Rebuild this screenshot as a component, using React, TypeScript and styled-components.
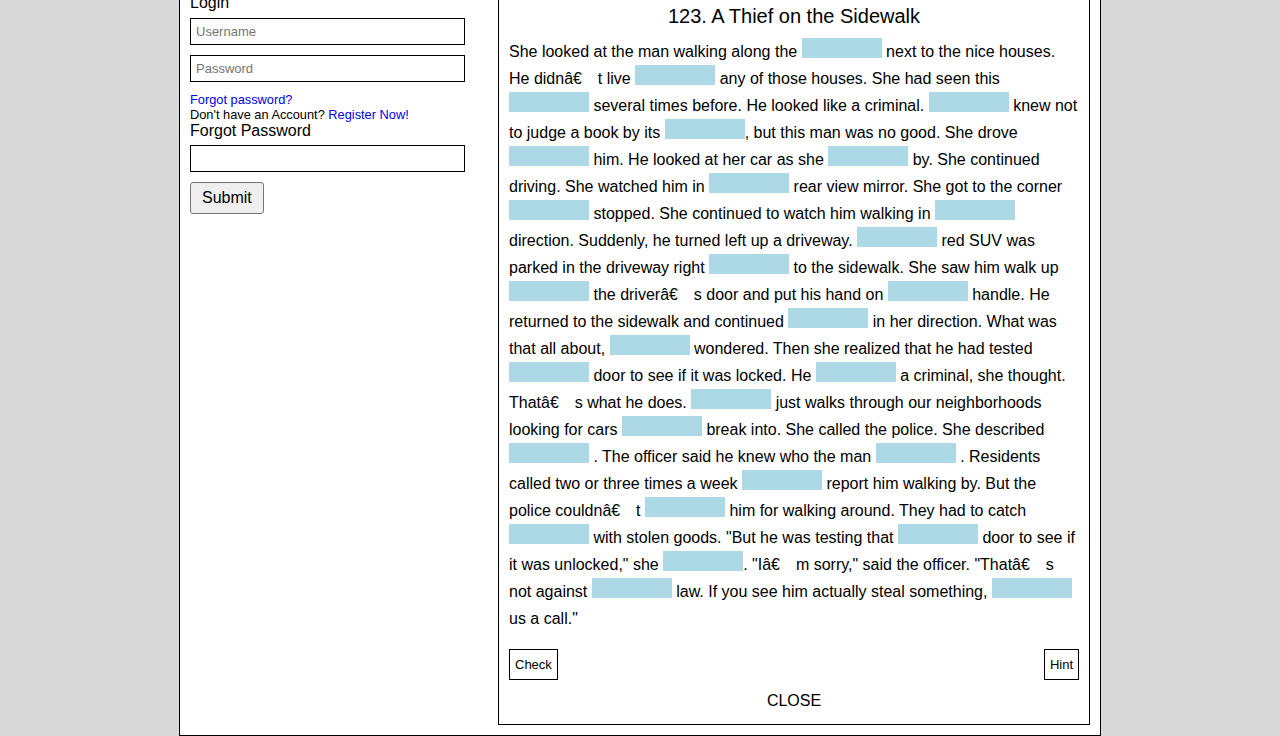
import React from "react";
import styled, { createGlobalStyle } from "styled-components";

const Global = createGlobalStyle`
  html, body { margin: 0; padding: 0; }
  body {
    background: #d9d9d9;
    font-family: "Liberation Sans", Arial, sans-serif;
    color: #000;
    overflow: hidden;
  }
`;

const Frame = styled.div`
  box-sizing: border-box;
  width: 922px;
  margin: -17px auto 0;
  background: #fff;
  border: 1px solid #000;
  padding: 10px;
  display: flex;
  align-items: flex-start;
`;

const Side = styled.div`
  width: 308px;
  flex: none;
  display: flex;
  flex-direction: column;
  align-items: flex-start;
`;

const Heading = styled.div`
  font-size: 16px;
  line-height: 18px;
`;

const Field = styled.input<{ $gap?: number }>`
  box-sizing: border-box;
  width: 275px;
  height: 27px;
  border: 1px solid #000;
  padding: 0 5px;
  margin-top: ${(p) => p.$gap ?? 10}px;
  font-family: "Liberation Sans", Arial, sans-serif;
  font-size: 13px;
  outline: none;
  &::placeholder { color: #757575; }
`;

const Small = styled.div<{ $gap?: number }>`
  font-size: 12.8px;
  line-height: 15px;
  margin-top: ${(p) => p.$gap ?? 0}px;
`;

const Link = styled.a`
  color: #0000ee;
  text-decoration: none;
`;

const SubmitButton = styled.button`
  margin-top: 10px;
  font-family: "Liberation Sans", Arial, sans-serif;
  font-size: 16px;
  line-height: 18px;
  padding: 6px 11px;
  background: #efefef;
  border: 1px solid #767676;
  border-radius: 3px;
  color: #000;
`;

const Panel = styled.div`
  box-sizing: border-box;
  width: 592px;
  flex: none;
  border: 1px solid #000;
  padding: 10px 10px 14px;
  display: flex;
  flex-direction: column;
`;

const Title = styled.div`
  text-align: center;
  font-size: 20px;
  line-height: 23px;
`;

const Story = styled.p`
  margin: 10px 0 0;
  font-size: 16px;
  line-height: 27px;
`;

const Blank = styled.span`
  display: inline-block;
  width: 80px;
  height: 20px;
  background: #add8e6;
  vertical-align: -1px;
`;

const Garble = styled.span`
  letter-spacing: 0.85px;
`;

const ButtonRow = styled.div`
  display: flex;
  justify-content: space-between;
  margin-top: 17px;
`;

const SmallButton = styled.button`
  font-family: "Liberation Sans", Arial, sans-serif;
  font-size: 13px;
  line-height: 15px;
  padding: 7px 5px;
  background: #fff;
  border: 1px solid #000;
  border-radius: 0;
  color: #000;
`;

const Close = styled.div`
  text-align: center;
  font-size: 16px;
  line-height: 18px;
  margin-top: 12px;
`;

const AP = "\u0001";

const parts: string[] = [
  "She looked at the man walking along the ",
  " next to the nice houses. He didn" + AP + "t live ",
  " any of those houses. She had seen this ",
  " several times before. He looked like a criminal. ",
  " knew not to judge a book by its ",
  ", but this man was no good. She drove ",
  " him. He looked at her car as she ",
  " by. She continued driving. She watched him in ",
  " rear view mirror. She got to the corner ",
  " stopped. She continued to watch him walking in ",
  " direction. Suddenly, he turned left up a driveway. ",
  " red SUV was parked in the driveway right ",
  " to the sidewalk. She saw him walk up ",
  " the driver" + AP + "s door and put his hand on ",
  " handle. He returned to the sidewalk and continued ",
  " in her direction. What was that all about, ",
  " wondered. Then she realized that he had tested ",
  " door to see if it was locked. He ",
  " a criminal, she thought. That" + AP + "s what he does. ",
  " just walks through our neighborhoods looking for cars ",
  " break into. She called the police. She described ",
  " . The officer said he knew who the man ",
  " . Residents called two or three times a week ",
  " report him walking by. But the police couldn" + AP + "t ",
  " him for walking around. They had to catch ",
  " with stolen goods. \"But he was testing that ",
  " door to see if it was unlocked,\" she ",
  ". \"I" + AP + "m sorry,\" said the officer. \"That" + AP + "s not against ",
  " law. If you see him actually steal something, ",
  " us a call.\"",
];

function Segment({ text }: { text: string }) {
  const bits = text.split(AP);
  return (
    <>
      {bits.map((b, j) => (
        <React.Fragment key={j}>
          {b}
          {j < bits.length - 1 && (
            <>
              â€<Garble>{"\u00a0\u00a0\u00a0"}</Garble>
            </>
          )}
        </React.Fragment>
      ))}
    </>
  );
}

export default function App() {
  return (
    <>
      <Global />
      <Frame>
        <Side>
          <Heading>Login</Heading>
          <Field placeholder="Username" $gap={6} />
          <Field placeholder="Password" type="password" />
          <Small $gap={10}>
            <Link href="#">Forgot password?</Link>
          </Small>
          <Small>
            Don't have an Account? <Link href="#">Register Now!</Link>
          </Small>
          <Heading>Forgot Password</Heading>
          <Field $gap={5} />
          <SubmitButton>Submit</SubmitButton>
        </Side>
        <Panel>
          <Title>123. A Thief on the Sidewalk</Title>
          <Story>
            {parts.map((t, i) => (
              <React.Fragment key={i}>
                <Segment text={t} />
                {i < parts.length - 1 && <Blank />}
              </React.Fragment>
            ))}
          </Story>
          <ButtonRow>
            <SmallButton>Check</SmallButton>
            <SmallButton>Hint</SmallButton>
          </ButtonRow>
          <Close>CLOSE</Close>
        </Panel>
      </Frame>
    </>
  );
}
